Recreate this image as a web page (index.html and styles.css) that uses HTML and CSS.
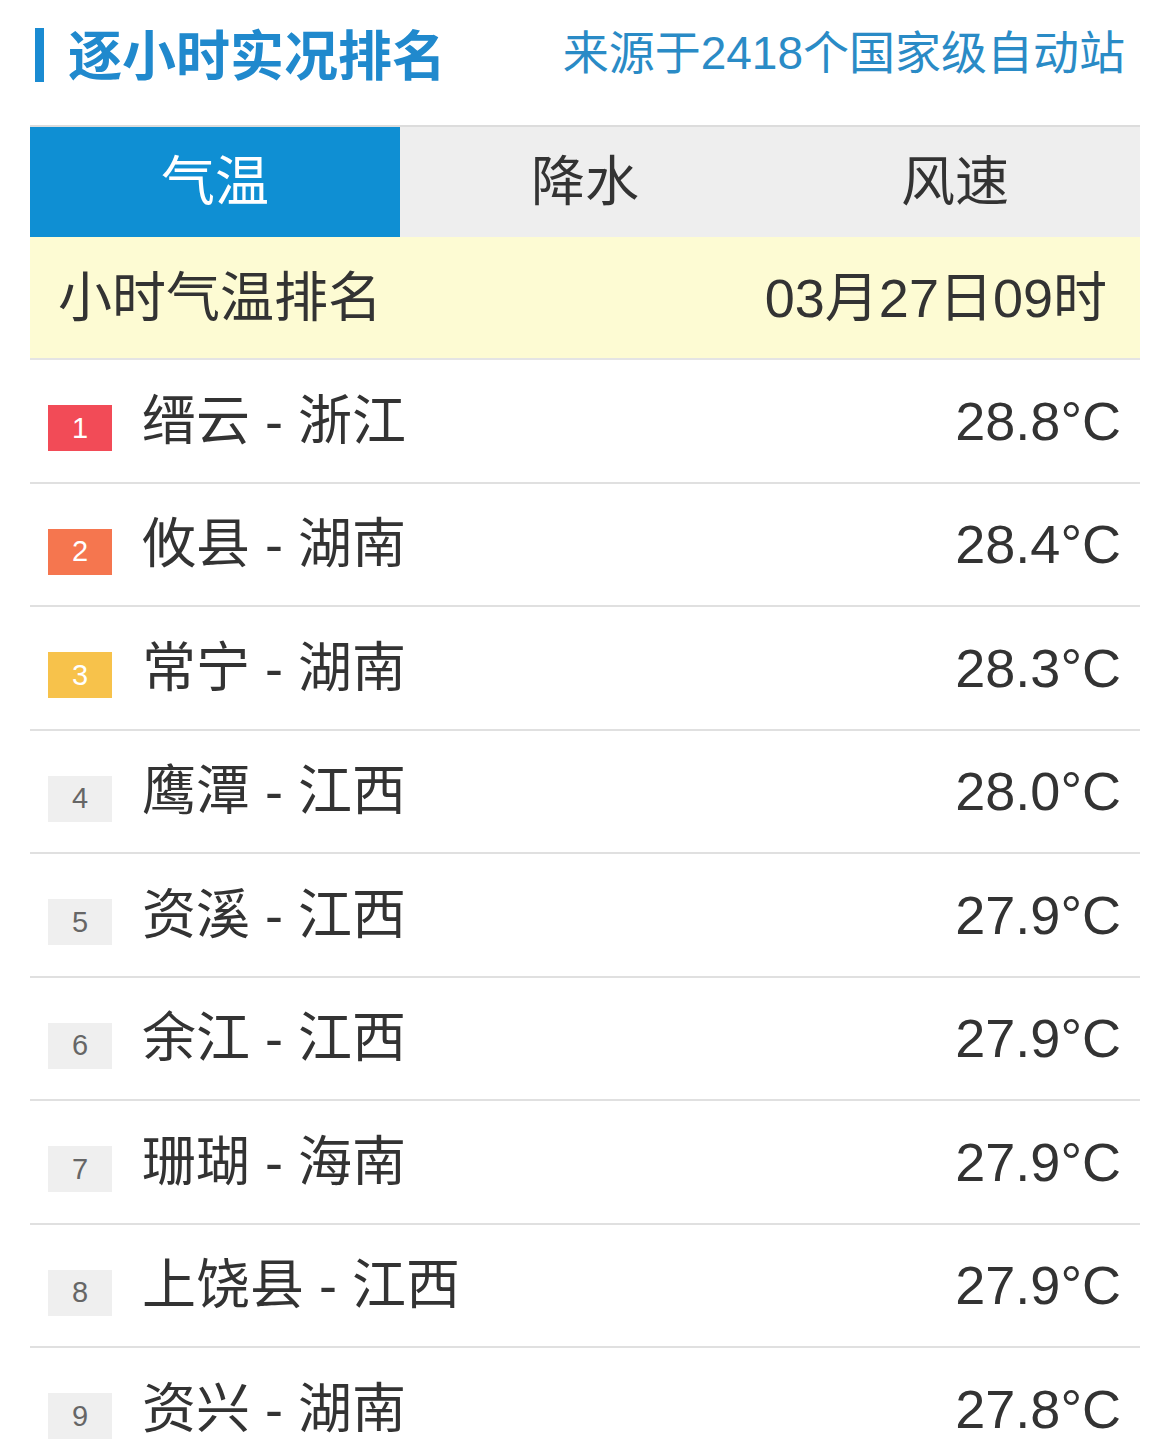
FILE: index.html
```html
<!DOCTYPE html>
<html lang="zh-CN">
<head>
<meta charset="utf-8">
<link rel="stylesheet" href="styles.css">
</head>
<body>
<div class="page">
  <header class="head">
    <div class="title"><span class="bar"></span><h1>逐小时实况排名</h1></div>
    <div class="source">来源于2418个国家级自动站</div>
  </header>
  <nav class="tabs">
    <div class="tab active">气温</div>
    <div class="tab">降水</div>
    <div class="tab">风速</div>
  </nav>
  <div class="sub">
    <span>小时气温排名</span>
    <span>03月27日09时</span>
  </div>
  <ul class="list">
    <li class="row"><span class="badge r1">1</span><span class="name">缙云 - 浙江</span><span class="val">28.8°C</span></li>
    <li class="row"><span class="badge r2">2</span><span class="name">攸县 - 湖南</span><span class="val">28.4°C</span></li>
    <li class="row"><span class="badge r3">3</span><span class="name">常宁 - 湖南</span><span class="val">28.3°C</span></li>
    <li class="row"><span class="badge">4</span><span class="name">鹰潭 - 江西</span><span class="val">28.0°C</span></li>
    <li class="row"><span class="badge">5</span><span class="name">资溪 - 江西</span><span class="val">27.9°C</span></li>
    <li class="row"><span class="badge">6</span><span class="name">余江 - 江西</span><span class="val">27.9°C</span></li>
    <li class="row"><span class="badge">7</span><span class="name">珊瑚 - 海南</span><span class="val">27.9°C</span></li>
    <li class="row"><span class="badge">8</span><span class="name">上饶县 - 江西</span><span class="val">27.9°C</span></li>
    <li class="row"><span class="badge">9</span><span class="name">资兴 - 湖南</span><span class="val">27.8°C</span></li>
  </ul>
</div>
</body>
</html>
```

FILE: styles.css
```css
* { box-sizing: border-box; }
html, body { margin: 0; padding: 0; background: #ffffff; }
body {
  font-family: "Liberation Sans", "Noto Sans CJK SC", sans-serif;
  color: #333333;
  height: 1448px;
  overflow: hidden;
}
.page {
  width: 1110px;
  margin-left: 30px;
}
.head {
  height: 106px;
  display: flex;
  align-items: center;
  justify-content: space-between;
  margin-bottom: 19px;
}
.title { display: flex; align-items: center; }
.bar {
  display: block;
  width: 9px;
  height: 54px;
  background: #1a8bd2;
  margin-left: 5px;
  margin-top: 4px;
}
.title h1 {
  margin: 0 0 0 24px;
  font-family: "Noto Sans CJK SC", sans-serif;
  font-weight: 700;
  font-size: 54px;
  line-height: 1;
  color: #2089cd;
}
.source {
  font-size: 46px;
  line-height: 1;
  color: #2a8bc6;
  margin-right: 15px;
}
.tabs {
  display: grid;
  grid-template-columns: repeat(3, 1fr);
  border-top: 2px solid #dcdcdc;
  background: #eeeeee;
}
.tab {
  height: 110px;
  display: flex;
  align-items: center;
  justify-content: center;
  font-size: 54px;
  line-height: 1;
  color: #333333;
}
.tab.active { background: #0f8fd3; color: #ffffff; }
.sub {
  height: 123px;
  background: #fdfbd3;
  border-bottom: 2px solid #e4e4e4;
  display: flex;
  align-items: center;
  justify-content: space-between;
  padding: 0 33px 0 28px;
  font-size: 54px;
  line-height: 1;
  color: #333333;
}
.list { list-style: none; margin: 0; padding: 0; }
.row {
  height: 123.5px;
  border-bottom: 2px solid #e0e0e0;
  display: flex;
  align-items: center;
  padding: 0 19px 0 18px;
  line-height: 1;
}
.badge {
  width: 64px;
  height: 46px;
  margin-top: 15px;
  display: flex;
  align-items: center;
  justify-content: center;
  font-size: 29px;
  background: #efefef;
  color: #666666;
}
.badge.r1 { background: #f24b57; color: #ffffff; }
.badge.r2 { background: #f5764f; color: #ffffff; }
.badge.r3 { background: #f7c24b; color: #ffffff; }
.name {
  margin-left: 30px;
  font-size: 54px;
  color: #333333;
  flex: 1;
}
.val {
  font-size: 54px;
  color: #333333;
}
```
